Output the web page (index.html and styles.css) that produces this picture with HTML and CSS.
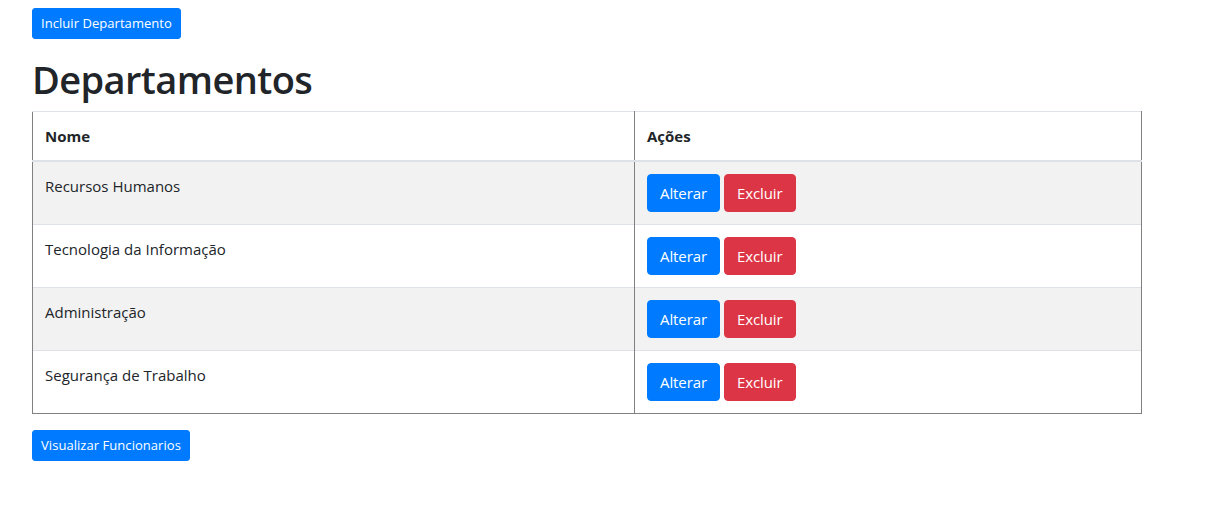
FILE: index.html
```html
<!DOCTYPE html>
<html lang="pt">
<head>
<meta charset="utf-8">
<title>Departamentos</title>
<link rel="stylesheet" href="styles.css">
</head>
<body>
<div class="page">
  <a class="btn btn-primary btn-sm">Incluir Departamento</a>
  <h1 class="title">Departamentos</h1>
  <table class="table">
    <thead>
      <tr><th class="col-nome">Nome</th><th>Ações</th></tr>
    </thead>
    <tbody>
      <tr class="odd"><td>Recursos Humanos</td><td><div class="actions"><a class="btn btn-primary">Alterar</a><a class="btn btn-danger">Excluir</a></div></td></tr>
      <tr><td>Tecnologia da Informação</td><td><div class="actions"><a class="btn btn-primary">Alterar</a><a class="btn btn-danger">Excluir</a></div></td></tr>
      <tr class="odd"><td>Administração</td><td><div class="actions"><a class="btn btn-primary">Alterar</a><a class="btn btn-danger">Excluir</a></div></td></tr>
      <tr><td>Segurança de Trabalho</td><td><div class="actions"><a class="btn btn-primary">Alterar</a><a class="btn btn-danger">Excluir</a></div></td></tr>
    </tbody>
  </table>
  <a class="btn btn-primary btn-sm">Visualizar Funcionarios</a>
</div>
</body>
</html>
```
FILE: styles.css
```css
* { box-sizing: border-box; }
html, body { margin: 0; padding: 0; background: #fff; }
body {
  font-family: "Open Sans", "Noto Sans", "Liberation Sans", sans-serif;
  font-size: 15px;
  line-height: 24px;
  color: #212529;
}
.page {
  padding: 8px 0 0 32px;
  width: 1142px;
}
.btn {
  display: inline-block;
  font-size: 15px;
  line-height: 24px;
  padding: 6px 12px;
  border: 1px solid transparent;
  border-radius: 4px;
  color: #fff;
  vertical-align: middle;
  cursor: pointer;
  letter-spacing: -0.1px;
}
.btn-sm {
  font-size: 13px;
  line-height: 21px;
  padding: 4px 8px;
  border-radius: 3px;
  letter-spacing: 0.05px;
}
.btn-primary { background: #007bff; border-color: #007bff; }
.btn-danger { background: #dc3545; border-color: #dc3545; }
.actions { display: flex; gap: 4px; }
.title {
  margin: 16px 0 8px;
  font-size: 38px;
  line-height: 48px;
  font-weight: 600;
  letter-spacing: -0.6px;
}
.table {
  width: 1110px;
  border-collapse: collapse;
  margin-bottom: 16px;
  border: 1px solid #808080;
  border-top-color: #dee2e6;
}
.table th, .table td {
  padding: 12px;
  text-align: left;
  vertical-align: top;
  border-top: 1px solid #dee2e6;
  border-left: 1px solid #808080;
  border-right: 1px solid #808080;
}
.table th { font-weight: 700; border-bottom: 2px solid #dee2e6; }
.table td { height: 62px; }
.col-nome { width: 602px; }
.table .odd td { background: #f2f2f2; }
```
